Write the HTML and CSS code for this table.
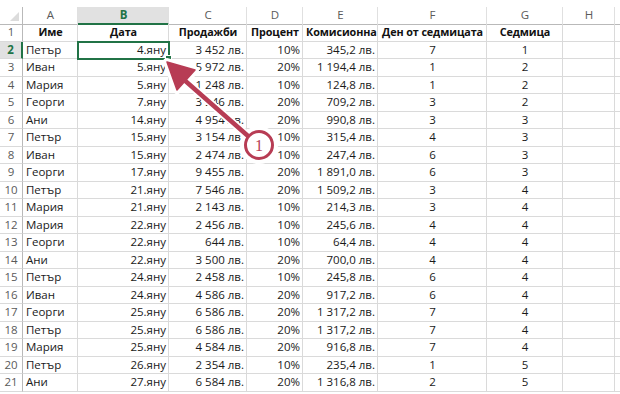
FILE: index.html
```html
<!DOCTYPE html>
<html lang="bg">
<head>
<meta charset="utf-8">
<title>Sheet</title>
<link rel="stylesheet" href="styles.css">
</head>
<body>
<div class="sheet">
  <div class="row colhdr">
    <span class="corner"></span><span>A</span><span class="selcol">B</span><span>C</span><span>D</span><span>E</span><span>F</span><span>G</span><span>H</span><span></span>
  </div>
  <div class="row titles">
    <span class="rh">1</span><span class="c">Име</span><span class="c">Дата</span><span class="c">Продажби</span><span class="c">Процент</span><span class="c">Комисионна</span><span class="c">Ден от седмицата</span><span class="c">Седмица</span><span></span><span></span>
  </div>
  <div class="row">
    <span class="rh selrow">2</span><span>Петър</span><span class="r active">4.яну<i class="handle"></i></span><span class="r">3 452 лв.</span><span class="r">10%</span><span class="r">345,2 лв.</span><span class="c">7</span><span class="c">1</span><span></span><span></span>
  </div>
  <div class="row">
    <span class="rh">3</span><span>Иван</span><span class="r">5.яну</span><span class="r">5 972 лв.</span><span class="r">20%</span><span class="r">1 194,4 лв.</span><span class="c">1</span><span class="c">2</span><span></span><span></span>
  </div>
  <div class="row">
    <span class="rh">4</span><span>Мария</span><span class="r">5.яну</span><span class="r">1 248 лв.</span><span class="r">10%</span><span class="r">124,8 лв.</span><span class="c">1</span><span class="c">2</span><span></span><span></span>
  </div>
  <div class="row">
    <span class="rh">5</span><span>Георги</span><span class="r">7.яну</span><span class="r">3 546 лв.</span><span class="r">20%</span><span class="r">709,2 лв.</span><span class="c">3</span><span class="c">2</span><span></span><span></span>
  </div>
  <div class="row">
    <span class="rh">6</span><span>Ани</span><span class="r">14.яну</span><span class="r">4 954 лв.</span><span class="r">20%</span><span class="r">990,8 лв.</span><span class="c">3</span><span class="c">3</span><span></span><span></span>
  </div>
  <div class="row">
    <span class="rh">7</span><span>Петър</span><span class="r">15.яну</span><span class="r">3 154 лв.</span><span class="r">10%</span><span class="r">315,4 лв.</span><span class="c">4</span><span class="c">3</span><span></span><span></span>
  </div>
  <div class="row">
    <span class="rh">8</span><span>Иван</span><span class="r">15.яну</span><span class="r">2 474 лв.</span><span class="r">10%</span><span class="r">247,4 лв.</span><span class="c">6</span><span class="c">3</span><span></span><span></span>
  </div>
  <div class="row">
    <span class="rh">9</span><span>Георги</span><span class="r">17.яну</span><span class="r">9 455 лв.</span><span class="r">20%</span><span class="r">1 891,0 лв.</span><span class="c">6</span><span class="c">3</span><span></span><span></span>
  </div>
  <div class="row">
    <span class="rh">10</span><span>Петър</span><span class="r">21.яну</span><span class="r">7 546 лв.</span><span class="r">20%</span><span class="r">1 509,2 лв.</span><span class="c">3</span><span class="c">4</span><span></span><span></span>
  </div>
  <div class="row">
    <span class="rh">11</span><span>Мария</span><span class="r">21.яну</span><span class="r">2 143 лв.</span><span class="r">10%</span><span class="r">214,3 лв.</span><span class="c">3</span><span class="c">4</span><span></span><span></span>
  </div>
  <div class="row">
    <span class="rh">12</span><span>Мария</span><span class="r">22.яну</span><span class="r">2 456 лв.</span><span class="r">10%</span><span class="r">245,6 лв.</span><span class="c">4</span><span class="c">4</span><span></span><span></span>
  </div>
  <div class="row">
    <span class="rh">13</span><span>Георги</span><span class="r">22.яну</span><span class="r">644 лв.</span><span class="r">10%</span><span class="r">64,4 лв.</span><span class="c">4</span><span class="c">4</span><span></span><span></span>
  </div>
  <div class="row">
    <span class="rh">14</span><span>Ани</span><span class="r">22.яну</span><span class="r">3 500 лв.</span><span class="r">20%</span><span class="r">700,0 лв.</span><span class="c">4</span><span class="c">4</span><span></span><span></span>
  </div>
  <div class="row">
    <span class="rh">15</span><span>Петър</span><span class="r">24.яну</span><span class="r">2 458 лв.</span><span class="r">10%</span><span class="r">245,8 лв.</span><span class="c">6</span><span class="c">4</span><span></span><span></span>
  </div>
  <div class="row">
    <span class="rh">16</span><span>Иван</span><span class="r">24.яну</span><span class="r">4 586 лв.</span><span class="r">20%</span><span class="r">917,2 лв.</span><span class="c">6</span><span class="c">4</span><span></span><span></span>
  </div>
  <div class="row">
    <span class="rh">17</span><span>Георги</span><span class="r">25.яну</span><span class="r">6 586 лв.</span><span class="r">20%</span><span class="r">1 317,2 лв.</span><span class="c">7</span><span class="c">4</span><span></span><span></span>
  </div>
  <div class="row">
    <span class="rh">18</span><span>Петър</span><span class="r">25.яну</span><span class="r">6 586 лв.</span><span class="r">20%</span><span class="r">1 317,2 лв.</span><span class="c">7</span><span class="c">4</span><span></span><span></span>
  </div>
  <div class="row">
    <span class="rh">19</span><span>Мария</span><span class="r">25.яну</span><span class="r">4 584 лв.</span><span class="r">20%</span><span class="r">916,8 лв.</span><span class="c">7</span><span class="c">4</span><span></span><span></span>
  </div>
  <div class="row">
    <span class="rh">20</span><span>Петър</span><span class="r">26.яну</span><span class="r">2 354 лв.</span><span class="r">10%</span><span class="r">235,4 лв.</span><span class="c">1</span><span class="c">5</span><span></span><span></span>
  </div>
  <div class="row">
    <span class="rh">21</span><span>Ани</span><span class="r">27.яну</span><span class="r">6 584 лв.</span><span class="r">20%</span><span class="r">1 316,8 лв.</span><span class="c">2</span><span class="c">5</span><span></span><span></span>
  </div>

  <svg class="callout" width="620" height="394" viewBox="0 0 620 394" aria-hidden="true">
    <g stroke="#ffffff" stroke-width="8" stroke-linecap="round" fill="#ffffff" stroke-linejoin="round">
      <line x1="182" y1="78" x2="248" y2="136"/>
      <polygon points="167,62 195,70 177,90"/>
      <circle cx="259" cy="145" r="15"/>
    </g>
    <line x1="182" y1="78" x2="248" y2="136" stroke="#b73c54" stroke-width="4.5" stroke-linecap="round"/>
    <polygon points="167,62 195,70 177,90" fill="#b73c54" stroke="#b73c54" stroke-width="1.5" stroke-linejoin="round"/>
    <circle cx="259" cy="145" r="13.5" fill="#ffffff" stroke="#b73c54" stroke-width="3"/>
    <text x="259" y="151" text-anchor="middle" class="num">1</text>
  </svg>
</div>
</body>
</html>
```

FILE: styles.css
```css
html, body {
  margin: 0;
  padding: 0;
  background: #ffffff;
}

.sheet {
  position: relative;
  width: 620px;
  height: 394px;
  padding-top: 7px;
  box-sizing: border-box;
  overflow: hidden;
  font-family: "Open Sans", "Liberation Sans", sans-serif;
  font-size: 11.5px;
  color: #1a1a1a;
}

.row {
  display: grid;
  grid-template-columns: 23px 55px 91px 78px 56px 75px 109px 76px 52px 1fr;
  height: 17.5px;
}

.row > span {
  position: relative;
  box-sizing: border-box;
  border-right: 1px solid #dadada;
  border-bottom: 1px solid #dadada;
  padding: 0 2px 0 3px;
  line-height: 16px;
  white-space: nowrap;
  overflow: visible;
}

.row > span.r { text-align: right; }
.row > span.c { text-align: center; }

.row > span.rh {
  text-align: center;
  color: #5a5a5a;
  padding: 0;
  border-right: 1px solid #b9b9b9;
  border-bottom: 1px solid #dadada;
}

.row > span.selrow {
  background: #e1e1e1;
  color: #217346;
  font-weight: 700;
  border-right: 2px solid #217346;
}

.colhdr {
  height: 17px;
}

.colhdr > span {
  text-align: center;
  color: #5a5a5a;
  font-size: 11.5px;
  border-right: 1px solid #e0e0e0;
  border-bottom: 1px solid #b9b9b9;
}

.colhdr > span.selcol {
  background: #e1e1e1;
  color: #217346;
  font-weight: 700;
  border-bottom: 2px solid #217346;
}

.colhdr > span.corner {
  border-right: 1px solid #b9b9b9;
}

.colhdr > span.corner::after {
  content: "";
  position: absolute;
  right: 3px;
  bottom: 3px;
  width: 0;
  height: 0;
  border-left: 9px solid transparent;
  border-bottom: 9px solid #dcdcdc;
}

.titles > span {
  font-weight: 700;
  font-size: 10.8px;
  letter-spacing: -0.1px;
  color: #111111;
}

.titles > span.rh {
  font-weight: 400;
  font-size: 11.5px;
  letter-spacing: 0;
  color: #5a5a5a;
}

.row > span.active {
  outline: 2px solid #217346;
  outline-offset: -1px;
  z-index: 2;
}

.handle {
  position: absolute;
  right: -4px;
  bottom: -4px;
  width: 5px;
  height: 5px;
  background: #217346;
  border: 1px solid #ffffff;
}

.callout {
  position: absolute;
  left: 0;
  top: 0;
  z-index: 5;
  pointer-events: none;
}

.callout .num {
  font-family: "Liberation Serif", "DejaVu Serif", serif;
  font-size: 16px;
  fill: #b73c54;
}
```
